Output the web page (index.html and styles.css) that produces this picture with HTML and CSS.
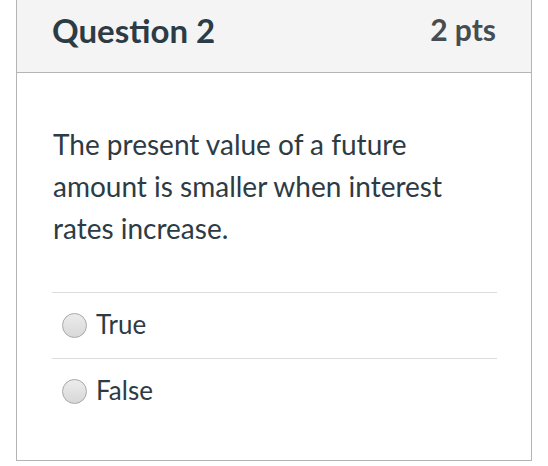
FILE: index.html
```html
<!DOCTYPE html>
<html>
<head>
<meta charset="utf-8">
<link rel="stylesheet" href="styles.css">
</head>
<body>
<div class="card">
  <div class="header">
    <span class="title">Question 2</span>
    <span class="pts">2 pts</span>
  </div>
  <div class="content">
    <p class="question">The present value of a future amount is smaller when interest rates increase.</p>
    <div class="answers">
      <label class="answer"><span class="radio"></span><span class="label">True</span></label>
      <label class="answer"><span class="radio"></span><span class="label">False</span></label>
    </div>
  </div>
</div>
</body>
</html>
```
FILE: styles.css
```css
html, body {
  margin: 0;
  padding: 0;
  background: #ffffff;
}
body {
  font-family: Lato, "Open Sans", sans-serif;
  color: #2d3b45;
}
.card {
  margin: -1px 0 0 16px;
  width: 516px;
  height: 462px;
  border: 1px solid #b4b4b4;
  box-sizing: border-box;
}
.header {
  height: 73px;
  background: #f4f4f4;
  border-bottom: 1px solid #b4b4b4;
  box-sizing: border-box;
  display: flex;
  justify-content: space-between;
  align-items: flex-start;
  padding: 10px 35px 0 35px;
}
.title {
  font-weight: 700;
  font-size: 33px;
  color: #2d3b45;
}
.pts {
  margin-top: 1px;
  font-weight: 700;
  font-size: 30px;
  color: #464c50;
}
.content {
  padding: 0 34px 0 35px;
}
.question {
  margin: 0;
  padding: 50px 0 43px 1px;
  font-size: 28px;
  line-height: 42px;
}
.answer {
  display: flex;
  align-items: center;
  gap: 9px;
  height: 66px;
  border-top: 1px solid #dcdcdc;
  box-sizing: border-box;
  padding-left: 10px;
}
.radio {
  width: 25px;
  height: 25px;
  border-radius: 50%;
  box-sizing: border-box;
  border: 1px solid #a8a8a8;
  background: linear-gradient(#ececec, #d8d8d8);
}
.label {
  font-size: 26px;
  padding-bottom: 4px;
  color: #2d3b45;
}
```
